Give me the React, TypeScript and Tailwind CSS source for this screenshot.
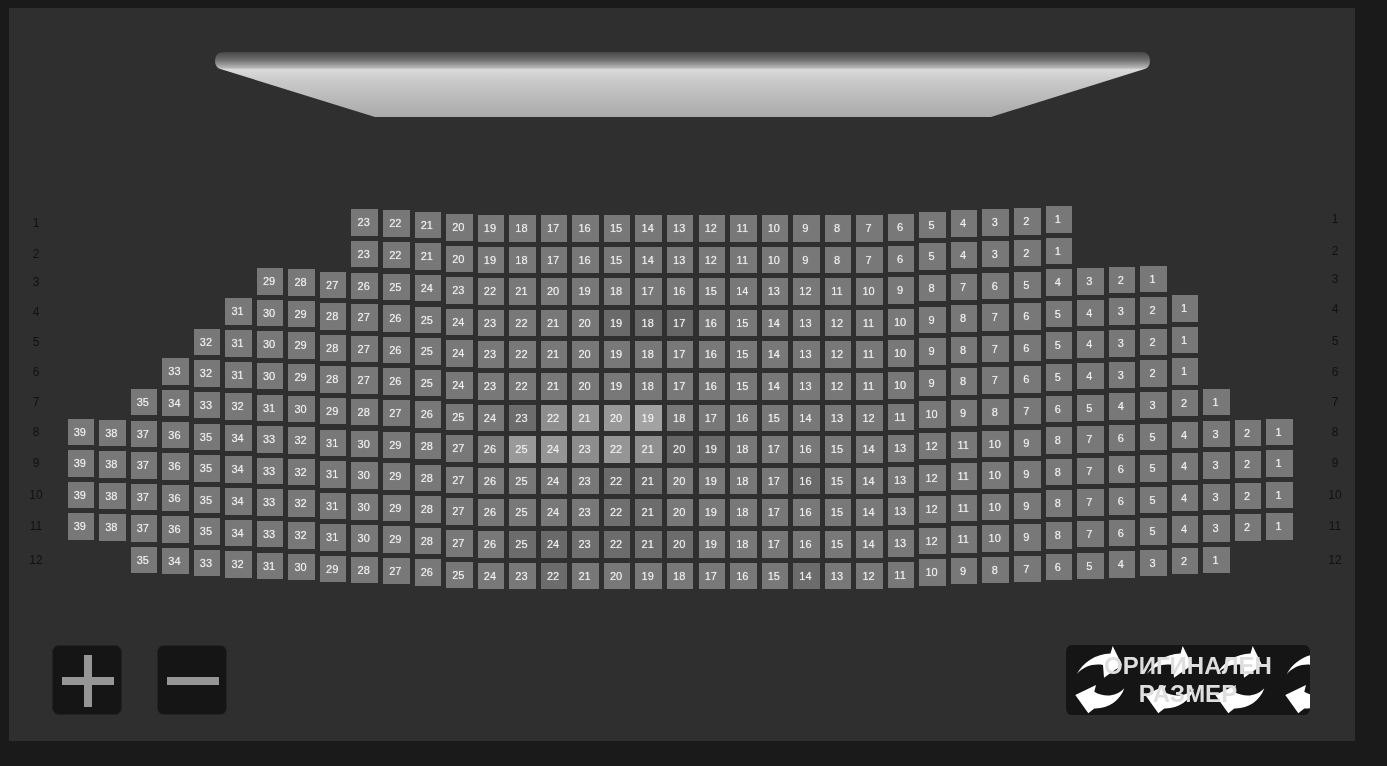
const SEAT_LEFT = 58.5;
const SEAT_TOP = 9.3;
const COL_STEP = 31.55;
const ROW_STEP = 31.6;

// vertical bow of the hall, by distance from the centre column
const BOW = [5.7, 5.7, 5.7, 5.7, 5.7, 5.7, 5.7, 4.7, 2.4, 1, 0, -1, -3.3, -4.4, -5.7, -7, -9, -10, -11, -12];

// row, first column, last column
const ROWS: [number, number, number][] = [
  [1, 9, 31],
  [2, 9, 31],
  [3, 6, 34],
  [4, 5, 35],
  [5, 4, 35],
  [6, 3, 35],
  [7, 2, 36],
  [8, 0, 38],
  [9, 0, 38],
  [10, 0, 38],
  [11, 0, 38],
  [12, 2, 36],
];

const TONES: Record<string, string> = {
  "4-19": "bg-[#6a6a6a]",
  "4-18": "bg-[#676767]",
  "4-17": "bg-[#656565]",
  "7-23": "bg-[#6c6c6c]",
  "7-22": "bg-[#8e8e8e]",
  "7-21": "bg-[#929292]",
  "7-20": "bg-[#989898]",
  "7-19": "bg-[#a2a2a2]",
  "8-25": "bg-[#999999]",
  "8-24": "bg-[#959595]",
  "8-23": "bg-[#8d8d8d]",
  "8-22": "bg-[#959595]",
  "8-21": "bg-[#8f8f8f]",
  "8-20": "bg-[#676767]",
  "8-19": "bg-[#6a6a6a]",
  "9-22": "bg-[#6c6c6c]",
  "9-21": "bg-[#6c6c6c]",
  "9-16": "bg-[#696969]",
  "10-22": "bg-[#6f6f6f]",
  "10-21": "bg-[#6c6c6c]",
  "11-25": "bg-[#6c6c6c]",
  "11-24": "bg-[#696969]",
  "11-23": "bg-[#6f6f6f]",
  "11-22": "bg-[#6c6c6c]",
  "11-21": "bg-[#6c6c6c]",
  "11-20": "bg-[#6c6c6c]",
  "12-22": "bg-[#6c6c6c]",
  "12-14": "bg-[#6c6c6c]",
};

const LEFT_LABELS = [223, 254, 282, 312, 342, 372, 402, 432, 463, 495, 526, 560];
const RIGHT_LABELS = [219, 251, 279, 309, 341, 372, 402, 432, 463, 495, 526, 560];

function Seat({ row, col, num }: { row: number; col: number; num: number }) {
  const off = BOW[Math.abs(col - 19)];
  const tone = TONES[`${row}-${num}`] ?? "bg-[#787878]";
  return (
    <div
      className={`absolute flex h-[26.5px] w-[26.5px] items-center justify-center pr-[2px] text-[11px] text-[#efefef] [text-shadow:0_0_1px_rgba(255,255,255,0.55)] ${tone}`}
      style={{ left: SEAT_LEFT + COL_STEP * col, top: SEAT_TOP + ROW_STEP * (row - 1) + off }}
    >
      {num}
    </div>
  );
}

function RefreshTile() {
  return (
    <svg viewBox="0 0 70 70" className="h-[70px] w-[70px] shrink-0" fill="#fff">
      <path d="M10.7 29.3C17 17 30 9 44.5 8.5L46.7 1L56 20L38 32.7L37 20C27 18.5 18 21 10.7 29.3Z" />
      <path d="M58.3 43.3C54 56 42 64 28.3 63.5L22.3 68.3L9.3 50L30 40L28.3 46.7C38 52.5 50 52 58.3 43.3Z" />
    </svg>
  );
}

export default function App() {
  return (
    <div className="h-screen overflow-hidden bg-[#1a1a1a] pl-[9px] pt-[8px] font-['Liberation_Sans',Arial,sans-serif]">
      <div className="h-[733px] w-[1346px] bg-[#2f2f2f] pt-[44px]">
        {/* screen */}
        <svg viewBox="0 0 935 65" className="ml-[206px] block h-[65px] w-[935px]">
          <defs>
            <linearGradient id="screen" x1="0" y1="0" x2="0" y2="1">
              <stop offset="0" stopColor="#474747" />
              <stop offset="0.12" stopColor="#6e6e6e" />
              <stop offset="0.24" stopColor="#b4b4b4" />
              <stop offset="0.27" stopColor="#dadada" />
              <stop offset="0.45" stopColor="#c9c9c9" />
              <stop offset="1" stopColor="#aaaaaa" />
            </linearGradient>
          </defs>
          <path
            d="M9 0H926Q935 0 935 9Q935 16 928 17.5L776 65H160L7 17.5Q0 16 0 9Q0 0 9 0Z"
            fill="url(#screen)"
          />
        </svg>

        {/* hall */}
        <div className="relative mt-[83px] h-[400px] will-change-transform">
          {ROWS.map(([row, first, last]) =>
            Array.from({ length: last - first + 1 }, (_, i) => (
              <Seat key={`${row}-${i}`} row={row} col={first + i} num={last - first + 1 - i} />
            )),
          )}
          {LEFT_LABELS.map((y, i) => (
            <div
              key={i}
              className="absolute left-[11px] w-8 text-center text-xs leading-4 text-[#111]"
              style={{ top: y - 208 }}
            >
              {i + 1}
            </div>
          ))}
          {RIGHT_LABELS.map((y, i) => (
            <div
              key={i}
              className="absolute left-[1310px] w-8 text-center text-xs leading-4 text-[#111]"
              style={{ top: y - 208 }}
            >
              {i + 1}
            </div>
          ))}
        </div>

        {/* controls */}
        <div className="mr-[45px] mt-[45px] flex gap-[35px] pl-[43px] will-change-transform">
          <button className="h-[70px] w-[70px] rounded-[7px] border border-[#222] bg-[#151515]">
            <svg viewBox="0 0 70 70" className="-m-px block h-[70px] w-[70px]" fill="#969696">
              <rect x="10" y="32" width="52" height="8" />
              <rect x="32" y="10" width="8" height="52" />
            </svg>
          </button>
          <button className="h-[70px] w-[70px] rounded-[7px] border border-[#222] bg-[#151515]">
            <svg viewBox="0 0 70 70" className="-m-px block h-[70px] w-[70px]" fill="#969696">
              <rect x="10" y="32" width="52" height="8" />
            </svg>
          </button>
          <button className="relative ml-auto h-[70px] w-[244px] overflow-hidden rounded-md bg-[#151515]">
            <span className="absolute inset-0 flex">
              <RefreshTile />
              <RefreshTile />
              <RefreshTile />
              <RefreshTile />
            </span>
            <span className="relative block text-center text-2xl leading-7 font-bold text-[#dedede]">
              ОРИГИНАЛЕН
              <br />
              РАЗМЕР
            </span>
          </button>
        </div>
      </div>
    </div>
  );
}
